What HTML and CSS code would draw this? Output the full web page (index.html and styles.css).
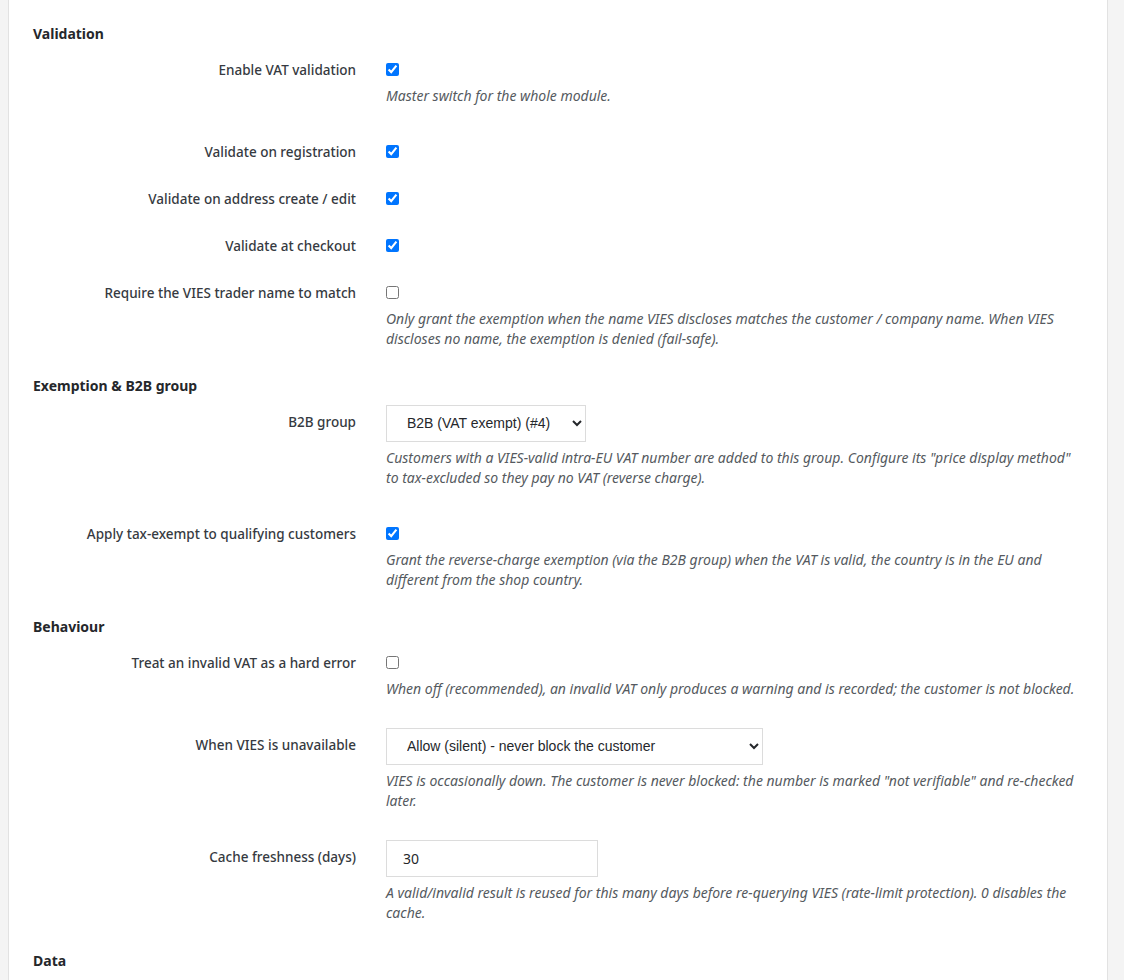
FILE: index.html
```html
<!DOCTYPE html>
<html lang="en">
<head>
    <meta charset="UTF-8">
    <meta name="viewport" content="width=device-width, initial-scale=1.0">
    <title>VIES VAT validation - Settings</title>
    <link rel="stylesheet" href="styles.css">
</head>
<body>

    <div class="panel">
        <form id="viesSettings">
            <h3 class="section-title">Validation</h3>

            <div class="form-row">
                <label class="row-label" for="enableVat">Enable VAT validation</label>
                <div class="row-control">
                    <div class="check-wrap"><input type="checkbox" id="enableVat" checked></div>
                    <p class="help">Master switch for the whole module.</p>
                </div>
            </div>

            <div class="form-row">
                <label class="row-label" for="onRegister">Validate on registration</label>
                <div class="row-control">
                    <div class="check-wrap"><input type="checkbox" id="onRegister" checked></div>
                </div>
            </div>

            <div class="form-row">
                <label class="row-label" for="onAddress">Validate on address create / edit</label>
                <div class="row-control">
                    <div class="check-wrap"><input type="checkbox" id="onAddress" checked></div>
                </div>
            </div>

            <div class="form-row">
                <label class="row-label" for="onCheckout">Validate at checkout</label>
                <div class="row-control">
                    <div class="check-wrap"><input type="checkbox" id="onCheckout" checked></div>
                </div>
            </div>

            <div class="form-row">
                <label class="row-label" for="nameMatch">Require the VIES trader name to match</label>
                <div class="row-control">
                    <div class="check-wrap"><input type="checkbox" id="nameMatch"></div>
                    <p class="help">Only grant the exemption when the name VIES discloses matches the customer / company name. When VIES discloses no name, the exemption is denied (fail-safe).</p>
                </div>
            </div>

            <h3 class="section-title">Exemption &amp; B2B group</h3>

            <div class="form-row">
                <label class="row-label field-label" for="b2bGroup">B2B group</label>
                <div class="row-control">
                    <select id="b2bGroup" class="field select-short">
                        <option>B2B (VAT exempt) (#4)</option>
                        <option>Customer (#3)</option>
                        <option>Guest (#2)</option>
                    </select>
                    <p class="help">Customers with a VIES-valid intra-EU VAT number are added to this group. Configure its "price display method" to tax-excluded so they pay no VAT (reverse charge).</p>
                </div>
            </div>

            <div class="form-row">
                <label class="row-label" for="taxExempt">Apply tax-exempt to qualifying customers</label>
                <div class="row-control">
                    <div class="check-wrap"><input type="checkbox" id="taxExempt" checked></div>
                    <p class="help">Grant the reverse-charge exemption (via the B2B group) when the VAT is valid, the country is in the EU and different from the shop country.</p>
                </div>
            </div>

            <h3 class="section-title">Behaviour</h3>

            <div class="form-row">
                <label class="row-label" for="hardError">Treat an invalid VAT as a hard error</label>
                <div class="row-control">
                    <div class="check-wrap"><input type="checkbox" id="hardError"></div>
                    <p class="help">When off (recommended), an invalid VAT only produces a warning and is recorded; the customer is not blocked.</p>
                </div>
            </div>

            <div class="form-row">
                <label class="row-label field-label" for="viesDown">When VIES is unavailable</label>
                <div class="row-control">
                    <select id="viesDown" class="field select-long">
                        <option>Allow (silent) - never block the customer</option>
                        <option>Warn - show a notice to the customer</option>
                    </select>
                    <p class="help">VIES is occasionally down. The customer is never blocked: the number is marked "not verifiable" and re-checked later.</p>
                </div>
            </div>

            <div class="form-row">
                <label class="row-label field-label" for="cacheDays">Cache freshness (days)</label>
                <div class="row-control">
                    <input type="text" id="cacheDays" class="field input-days" value="30">
                    <p class="help">A valid/invalid result is reused for this many days before re-querying VIES (rate-limit protection). 0 disables the cache.</p>
                </div>
            </div>

            <h3 class="section-title">Data</h3>
        </form>
    </div>

</body>
</html>
```

FILE: styles.css
```css
body {
    font-family: 'Noto Sans', sans-serif;
    font-size: 14px;
    line-height: 20px;
    color: #363a41;
    background: #f4f4f4;
    margin: 0;
    padding: 0 16px 0 8px;
}
.panel {
    background: white;
    border: 1px solid #e2e2e2;
    border-top: none;
    padding: 24px 24px 40px 24px;
}
.section-title {
    font-size: 14px;
    font-weight: bold;
    line-height: 20px;
    margin: -2px 0 9px 0;
    color: #25272b;
}
.section-title:first-child {
    margin-top: 0;
}
.section-title:last-child {
    margin-top: -1px;
}
.form-row {
    display: grid;
    grid-template-columns: 323px 1fr;
    column-gap: 30px;
    margin-bottom: 20px;
}
.row-label {
    text-align: right;
    font-size: 13.5px;
    font-weight: 500;
    padding-top: 7px;
}
.field-label {
    padding-top: 7px;
}
.check-wrap {
    height: 27px;
    display: flex;
    align-items: center;
    padding-top: 5px;
    box-sizing: border-box;
}
.check-wrap input {
    margin: 0;
    width: 13px;
    height: 13px;
}
.help {
    font-style: italic;
    color: #555a60;
    margin: 6px 0 9px 0;
}
.field {
    height: 37px;
    border: 1px solid #dcdcdc;
    border-radius: 0;
    background: white;
    font-size: 14px;
    color: #25272b;
    box-sizing: border-box;
    display: block;
}
select.field {
    font-family: 'Liberation Sans', Arial, sans-serif;
    padding: 0 8px 2px 16px;
}
.select-short {
    width: 200px;
}
.select-long {
    width: 377px;
}
.input-days {
    width: 212px;
    padding: 0 16px;
    font-family: 'Noto Sans', sans-serif;
}
```
